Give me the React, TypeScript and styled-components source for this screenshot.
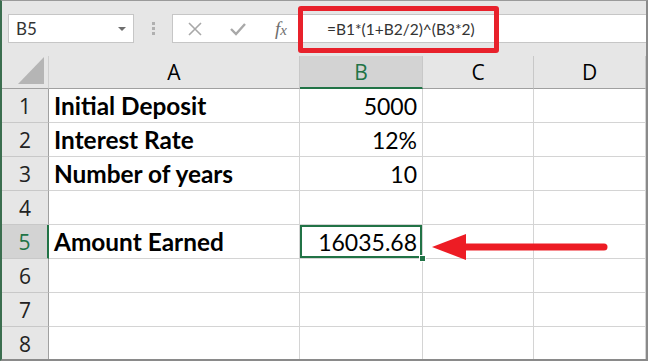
import styled, { createGlobalStyle } from 'styled-components';

const GlobalStyle = createGlobalStyle`
  html, body {
    margin: 0;
    padding: 0;
    background: #ffffff;
  }
  body {
    font-family: Lato, "Open Sans", sans-serif;
  }
`;

const GREEN = '#217346';

const columns = ['A', 'B', 'C', 'D'];

type Row = { label?: string; value?: string };

const rows: Row[] = [
  { label: 'Initial Deposit', value: '5000' },
  { label: 'Interest Rate', value: '12%' },
  { label: 'Number of years', value: '10' },
  {},
  { label: 'Amount Earned', value: '16035.68' },
  {},
  {},
  {},
];

const SELECTED_ROW = 5;
const SELECTED_COL = 'B';

export default function App() {
  return (
    <>
      <GlobalStyle />
      <Window>
        <Toolbar>
          <NameBox>
            <span>B5</span>
            <DropArrow />
          </NameBox>
          <Grip>
            <i />
            <i />
            <i />
          </Grip>
          <FormulaBar>
            <Buttons>
              <svg width="16" height="16" viewBox="0 0 16 16">
                <path d="M2 2 L14 14 M14 2 L2 14" stroke="#a8a8a8" strokeWidth="1.6" fill="none" />
              </svg>
              <svg width="18" height="16" viewBox="0 0 18 16">
                <path d="M2 8 L7 13 L16 3" stroke="#a8a8a8" strokeWidth="2.4" fill="none" />
              </svg>
              <Fx>
                f<sub>x</sub>
              </Fx>
            </Buttons>
            <Input>
              =B1*(1+B2/2)^(B3*2)
              <Highlight />
            </Input>
          </FormulaBar>
        </Toolbar>

        <Sheet>
          <Corner>
            <svg width="26" height="27" viewBox="0 0 26 27">
              <polygon points="26,0 26,27 0,27" fill="#b5b5b5" />
            </svg>
          </Corner>
          {columns.map((c) => (
            <ColHeader key={c} $active={c === SELECTED_COL}>
              {c}
            </ColHeader>
          ))}
          {rows.map((r, i) => {
            const n = i + 1;
            return (
              <RowGroup key={n}>
                <RowHeader $active={n === SELECTED_ROW}>{n}</RowHeader>
                <Cell $bold>{r.label}</Cell>
                <Cell $number $selected={n === SELECTED_ROW}>
                  {r.value}
                  {n === SELECTED_ROW && <FillHandle />}
                </Cell>
                <Cell />
                <Cell />
              </RowGroup>
            );
          })}
          <Arrow width="180" height="30" viewBox="0 0 180 30">
            <line x1="30" y1="15" x2="172" y2="15" stroke="#ed1c24" strokeWidth="7" strokeLinecap="round" />
            <polygon points="0,15 34,2 34,28" fill="#ed1c24" />
          </Arrow>
        </Sheet>
      </Window>
    </>
  );
}

const Window = styled.div`
  width: 648px;
  height: 361px;
  box-sizing: border-box;
  border-top: 1px solid #9a9a9a;
  border-left: 2px solid #3b6e4f;
  border-right: 2px solid #8a8a8a;
  border-bottom: 2px solid #8a8a8a;
  overflow: hidden;
  display: flex;
  flex-direction: column;
  background: #ffffff;
`;

const Toolbar = styled.div`
  height: 55px;
  flex: none;
  background: #e6e6e6;
  display: flex;
  align-items: flex-start;
  padding: 13px 0 0 6px;
  box-sizing: border-box;
`;

const NameBox = styled.div`
  width: 126px;
  height: 29px;
  box-sizing: border-box;
  border: 1px solid #c6c6c6;
  background: #ffffff;
  display: flex;
  align-items: center;
  justify-content: space-between;
  padding: 0 7px 0 7px;
  font-family: Lato, sans-serif;
  font-size: 17px;
  color: #333333;
`;

const DropArrow = styled.span`
  width: 0;
  height: 0;
  border-left: 4px solid transparent;
  border-right: 4px solid transparent;
  border-top: 4px solid #6e6e6e;
`;

const Grip = styled.div`
  width: 38px;
  height: 29px;
  display: flex;
  flex-direction: column;
  align-items: center;
  justify-content: center;
  gap: 2px;

  i {
    display: block;
    width: 3px;
    height: 3px;
    background: #b0b0b0;
  }
`;

const FormulaBar = styled.div`
  flex: 1;
  height: 29px;
  display: flex;
  box-sizing: border-box;
  border: 1px solid #c6c6c6;
  border-right: none;
  background: #ffffff;
`;

const Buttons = styled.div`
  width: 133px;
  display: flex;
  align-items: center;
  padding-left: 14px;
  gap: 26px;
  box-sizing: border-box;
`;

const Fx = styled.span`
  font-family: "Liberation Serif", serif;
  font-style: italic;
  font-size: 19px;
  color: #6e6e6e;
  margin-left: 2px;

  sub {
    font-size: 15px;
    vertical-align: baseline;
  }
`;

const Input = styled.div`
  flex: 1;
  position: relative;
  display: flex;
  align-items: center;
  padding-left: 21px;
  font-family: Lato, sans-serif;
  font-size: 15.5px;
  color: #333333;
`;

const Highlight = styled.span`
  position: absolute;
  left: -8px;
  top: -9px;
  width: 201px;
  height: 47px;
  box-sizing: border-box;
  border: 5px solid #e8212b;
  border-radius: 3px;
`;

const Sheet = styled.div`
  position: relative;
  flex: 1;
  display: grid;
  grid-template-columns: 47px 251px 123px 111px 112px;
  grid-template-rows: 33px repeat(8, 34px);
  font-family: Lato, sans-serif;
  font-size: 23px;
  color: #000000;
`;

const Corner = styled.div`
  background: #e6e6e6;
  border-right: 1px solid #cfcfcf;
  border-bottom: 1px solid #a0a0a0;
  display: flex;
  align-items: flex-end;
  justify-content: flex-end;
  padding: 0 4px 4px 0;
`;

const ColHeader = styled.div<{ $active?: boolean }>`
  background: ${({ $active }) => ($active ? '#d3d3d3' : '#e6e6e6')};
  color: ${({ $active }) => ($active ? GREEN : '#000000')};
  border-right: 1px solid #c8c8c8;
  border-bottom: ${({ $active }) => ($active ? `2px solid ${GREEN}` : '1px solid #a0a0a0')};
  display: flex;
  align-items: center;
  justify-content: center;
  font-family: "Open Sans", sans-serif;
  font-size: 21px;
`;

const RowGroup = styled.div`
  display: contents;
`;

const RowHeader = styled.div<{ $active?: boolean }>`
  background: ${({ $active }) => ($active ? '#d3d3d3' : '#e6e6e6')};
  color: ${({ $active }) => ($active ? GREEN : '#222222')};
  border-right: ${({ $active }) => ($active ? `2px solid ${GREEN}` : '1px solid #a0a0a0')};
  border-bottom: 1px solid #c8c8c8;
  display: flex;
  align-items: center;
  justify-content: center;
  font-family: "Open Sans", sans-serif;
  font-size: 21px;
`;

const Cell = styled.div<{ $bold?: boolean; $number?: boolean; $selected?: boolean }>`
  position: relative;
  border-right: 1px solid #d4d4d4;
  border-bottom: 1px solid #d4d4d4;
  display: flex;
  align-items: center;
  justify-content: ${({ $number }) => ($number ? 'flex-end' : 'flex-start')};
  padding: ${({ $number }) => ($number ? '0 5px 0 0' : '0 0 0 5px')};
  font-weight: ${({ $bold }) => ($bold ? 700 : 400)};
  font-size: ${({ $bold }) => ($bold ? '24.4px' : '23px')};
  white-space: nowrap;
  ${({ $selected }) => $selected && `box-shadow: inset 0 0 0 2px ${GREEN};`}
`;

const FillHandle = styled.span`
  position: absolute;
  right: -4px;
  bottom: -4px;
  width: 5px;
  height: 5px;
  background: ${GREEN};
  border: 1px solid #ffffff;
  z-index: 2;
`;

const Arrow = styled.svg`
  position: absolute;
  left: 430px;
  top: 176px;
`;
